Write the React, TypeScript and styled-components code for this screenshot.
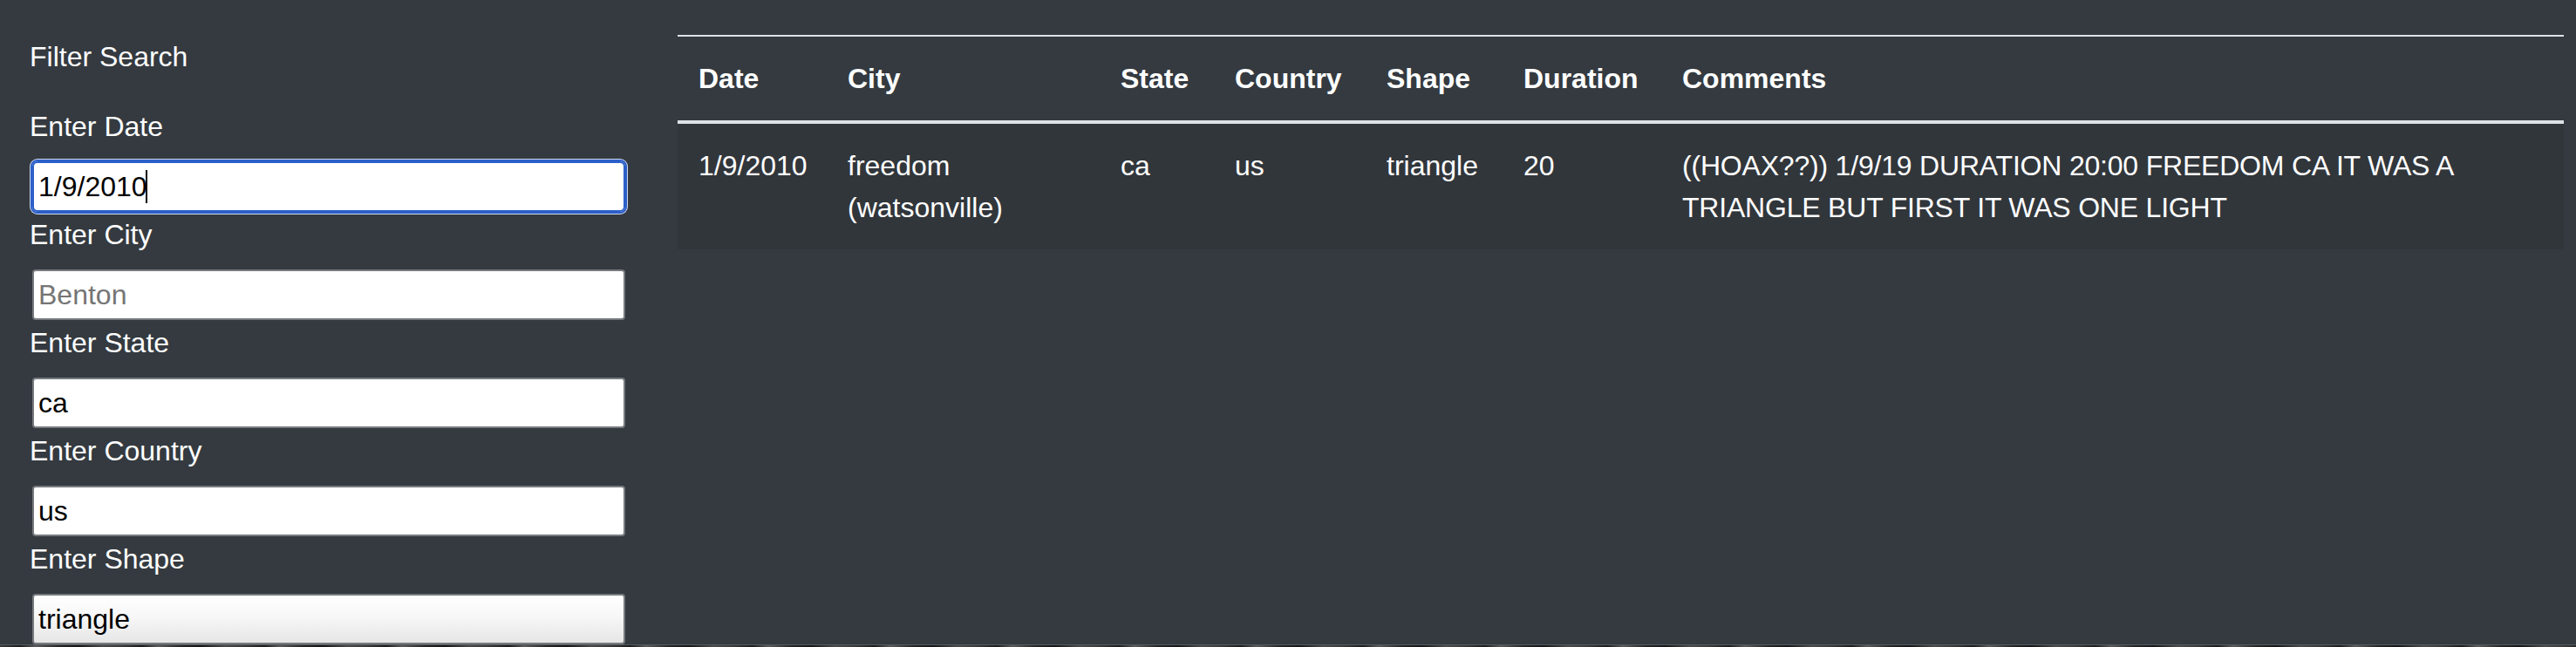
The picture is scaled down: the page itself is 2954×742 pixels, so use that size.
import React from "react";
import styled, { createGlobalStyle } from "styled-components";

const GlobalStyle = createGlobalStyle`
  html, body {
    margin: 0;
    padding: 0;
    background: #343a40;
  }
  * { box-sizing: border-box; }
`;

const Page = styled.div`
  display: flex;
  flex-direction: column;
  width: 2954px;
  height: 742px;
  overflow: hidden;
  background: #343a40;
  color: #ffffff;
  font-family: "Liberation Sans", Arial, Helvetica, sans-serif;
  font-size: 32px;
  line-height: 48px;
`;

const Content = styled.div`
  flex: 1;
  min-height: 0;
  display: flex;
`;

const Sidebar = styled.aside`
  flex: none;
  width: 777px;
  padding: 41px 0 0 34px;
  display: flex;
  flex-direction: column;
`;

const Title = styled.div`
  margin-bottom: 30px;
`;

const Field = styled.div`
  display: flex;
  flex-direction: column;
`;

const Label = styled.label`
  display: block;
  padding-top: 2px;
  margin-bottom: 16px;
`;

const InputWrap = styled.div`
  position: relative;
  width: 680px;
  margin-left: 3px;
`;

const Input = styled.input<{ $focused?: boolean; $shaded?: boolean }>`
  display: block;
  width: 680px;
  height: 58px;
  margin: 0;
  padding: 0 5px;
  font-family: "Liberation Sans", Arial, Helvetica, sans-serif;
  font-size: 32px;
  color: #000000;
  border: 2px solid ${(p) => (p.$focused ? "#2c5fc9" : "#777a7e")};
  border-radius: ${(p) => (p.$focused ? "6px" : "4px")};
  background: ${(p) =>
    p.$shaded
      ? "linear-gradient(180deg, #ffffff 0%, #f7f7f7 45%, #e6e6e6 100%)"
      : "#ffffff"};
  outline: ${(p) => (p.$focused ? "2px solid #2c5fc9" : "none")};
  outline-offset: 0;
  box-shadow: ${(p) => (p.$focused ? "0 0 0 3px #cfd8ea" : "none")};

  &::placeholder {
    color: #757575;
    opacity: 1;
  }
`;

const Caret = styled.span`
  position: absolute;
  left: 130px;
  top: 10px;
  width: 2px;
  height: 38px;
  background: #000000;
`;

const Main = styled.main`
  flex: 1;
  min-width: 0;
  padding: 40px 14px 0 0;
`;

const Table = styled.table`
  width: 100%;
  border-collapse: collapse;
  table-layout: fixed;
  border-top: 2px solid #dee2e6;
  color: #ffffff;
`;

const Col = styled.col<{ $w?: number }>`
  width: ${(p) => (p.$w ? `${p.$w}px` : "auto")};
`;

const Th = styled.th`
  padding: 24px;
  text-align: left;
  font-weight: 700;
  vertical-align: bottom;
  border-bottom: 4px solid #dee2e6;
`;

const BodyRow = styled.tr`
  background: #31363b;
`;

const Td = styled.td`
  padding: 24px;
  text-align: left;
  vertical-align: top;
`;

const CommentText = styled.span`
  letter-spacing: -0.2px;
`;

const Strip = styled.div`
  flex: none;
  height: 3px;
  border-top: 1px solid #55595e;
  background: repeating-linear-gradient(
    90deg,
    #3a3a3a 0px,
    #1c1c1c 23px,
    #5a5a5a 41px,
    #262626 67px,
    #161616 90px,
    #4a4a4a 118px,
    #3a3a3a 140px
  );
`;

const fields = [
  { label: "Enter City", value: "", placeholder: "Benton" },
  { label: "Enter State", value: "ca" },
  { label: "Enter Country", value: "us" },
  { label: "Enter Shape", value: "triangle", shaded: true },
];

const columns = [
  { name: "Date", w: 171 },
  { name: "City", w: 313 },
  { name: "State", w: 131 },
  { name: "Country", w: 174 },
  { name: "Shape", w: 157 },
  { name: "Duration", w: 182 },
  { name: "Comments" },
];

const row = [
  "1/9/2010",
  "freedom (watsonville)",
  "ca",
  "us",
  "triangle",
  "20",
];

const comment =
  "((HOAX??)) 1/9/19 DURATION 20:00 FREEDOM CA IT WAS A TRIANGLE BUT FIRST IT WAS ONE LIGHT";

export default function App() {
  return (
    <>
      <GlobalStyle />
      <Page>
        <Content>
          <Sidebar>
            <Title>Filter Search</Title>
            <Field>
              <Label htmlFor="date">Enter Date</Label>
              <InputWrap>
                <Input id="date" $focused defaultValue="1/9/2010" />
                <Caret />
              </InputWrap>
            </Field>
            {fields.map((f) => (
              <Field key={f.label}>
                <Label>{f.label}</Label>
                <InputWrap>
                  <Input
                    $shaded={f.shaded}
                    defaultValue={f.value}
                    placeholder={f.placeholder}
                  />
                </InputWrap>
              </Field>
            ))}
          </Sidebar>
          <Main>
            <Table>
              <colgroup>
                {columns.map((c) => (
                  <Col key={c.name} $w={c.w} />
                ))}
              </colgroup>
              <thead>
                <tr>
                  {columns.map((c) => (
                    <Th key={c.name}>{c.name}</Th>
                  ))}
                </tr>
              </thead>
              <tbody>
                <BodyRow>
                  {row.map((v, i) => (
                    <Td key={i}>{v}</Td>
                  ))}
                  <Td>
                    <CommentText>{comment}</CommentText>
                  </Td>
                </BodyRow>
              </tbody>
            </Table>
          </Main>
        </Content>
        <Strip />
      </Page>
    </>
  );
}
